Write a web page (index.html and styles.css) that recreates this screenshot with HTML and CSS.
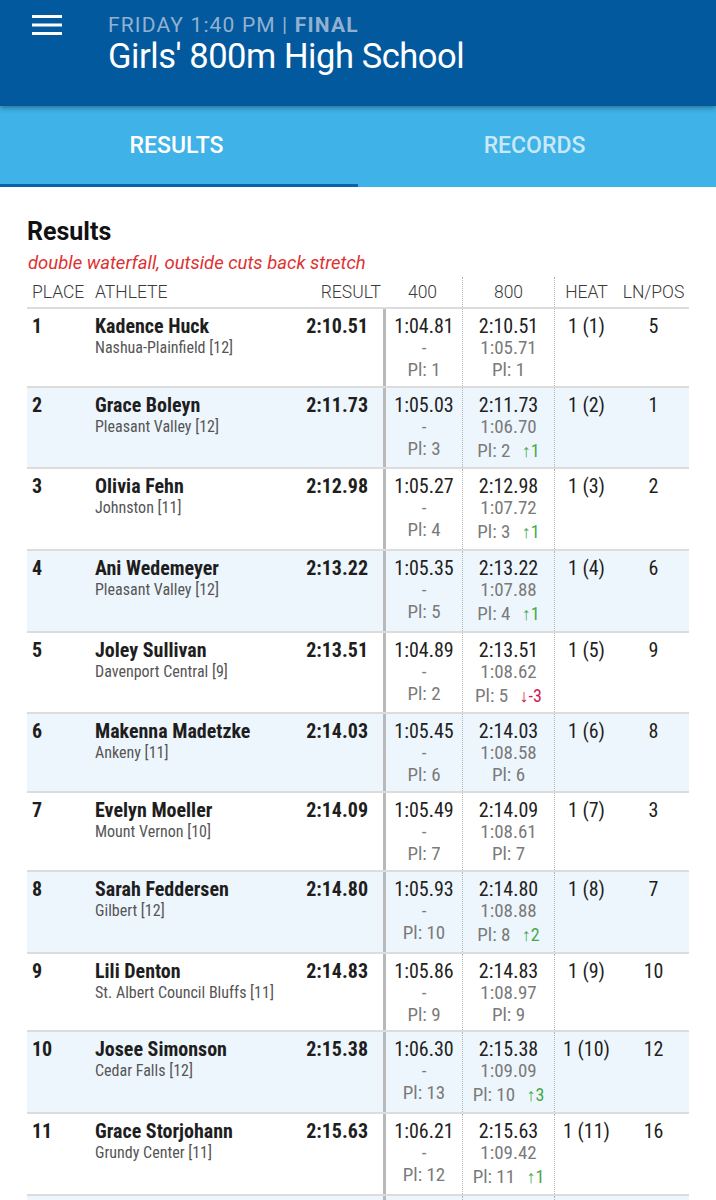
FILE: index.html
```html
<!DOCTYPE html>
<html lang="en">
<head>
<meta charset="utf-8">
<title>Girls' 800m High School</title>
<link rel="stylesheet" href="styles.css">
</head>
<body>
<header class="appbar">
  <button class="menu" aria-label="Menu">
    <svg width="30" height="22" viewBox="0 0 30 22"><rect x="0" y="1" width="30" height="3" fill="#fff"/><rect x="0" y="9.5" width="30" height="3" fill="#fff"/><rect x="0" y="18" width="30" height="3" fill="#fff"/></svg>
  </button>
  <div class="titles">
    <div class="meta">FRIDAY 1:40 PM | <b>FINAL</b></div>
    <div class="title">Girls' 800m High School</div>
  </div>
</header>
<nav class="tabs">
  <div class="tab active">RESULTS</div>
  <div class="tab">RECORDS</div>
</nav>
<main class="content">
  <h1 class="heading">Results</h1>
  <p class="note">double waterfall, outside cuts back stretch</p>
  <div class="table">
    <div class="row head">
      <div class="h place">PLACE</div>
      <div class="h athlete">ATHLETE</div>
      <div class="h result">RESULT</div>
      <div class="h split">400</div>
      <div class="h split dot">800</div>
      <div class="h heat dot">HEAT</div>
      <div class="h lane">LN/POS</div>
    </div>

    <div class="row">
      <div class="c place">1</div>
      <div class="c athlete"><div class="name">Kadence Huck</div><div class="school">Nashua-Plainfield [12]</div></div>
      <div class="c result">2:10.51</div>
      <div class="c split first"><div class="t">1:04.81</div><div class="s">-</div><div class="s">Pl: 1</div></div>
      <div class="c split dot"><div class="t">2:10.51</div><div class="s">1:05.71</div><div class="s">Pl: 1</div></div>
      <div class="c heat dot">1 (1)</div>
      <div class="c lane">5</div>
    </div>

    <div class="row alt">
      <div class="c place">2</div>
      <div class="c athlete"><div class="name">Grace Boleyn</div><div class="school">Pleasant Valley [12]</div></div>
      <div class="c result">2:11.73</div>
      <div class="c split first"><div class="t">1:05.03</div><div class="s">-</div><div class="s">Pl: 3</div></div>
      <div class="c split dot"><div class="t">2:11.73</div><div class="s">1:06.70</div><div class="s">Pl: 2 <span class="up">↑1</span></div></div>
      <div class="c heat dot">1 (2)</div>
      <div class="c lane">1</div>
    </div>

    <div class="row">
      <div class="c place">3</div>
      <div class="c athlete"><div class="name">Olivia Fehn</div><div class="school">Johnston [11]</div></div>
      <div class="c result">2:12.98</div>
      <div class="c split first"><div class="t">1:05.27</div><div class="s">-</div><div class="s">Pl: 4</div></div>
      <div class="c split dot"><div class="t">2:12.98</div><div class="s">1:07.72</div><div class="s">Pl: 3 <span class="up">↑1</span></div></div>
      <div class="c heat dot">1 (3)</div>
      <div class="c lane">2</div>
    </div>

    <div class="row alt">
      <div class="c place">4</div>
      <div class="c athlete"><div class="name">Ani Wedemeyer</div><div class="school">Pleasant Valley [12]</div></div>
      <div class="c result">2:13.22</div>
      <div class="c split first"><div class="t">1:05.35</div><div class="s">-</div><div class="s">Pl: 5</div></div>
      <div class="c split dot"><div class="t">2:13.22</div><div class="s">1:07.88</div><div class="s">Pl: 4 <span class="up">↑1</span></div></div>
      <div class="c heat dot">1 (4)</div>
      <div class="c lane">6</div>
    </div>

    <div class="row">
      <div class="c place">5</div>
      <div class="c athlete"><div class="name">Joley Sullivan</div><div class="school">Davenport Central [9]</div></div>
      <div class="c result">2:13.51</div>
      <div class="c split first"><div class="t">1:04.89</div><div class="s">-</div><div class="s">Pl: 2</div></div>
      <div class="c split dot"><div class="t">2:13.51</div><div class="s">1:08.62</div><div class="s">Pl: 5 <span class="down">↓-3</span></div></div>
      <div class="c heat dot">1 (5)</div>
      <div class="c lane">9</div>
    </div>

    <div class="row alt">
      <div class="c place">6</div>
      <div class="c athlete"><div class="name">Makenna Madetzke</div><div class="school">Ankeny [11]</div></div>
      <div class="c result">2:14.03</div>
      <div class="c split first"><div class="t">1:05.45</div><div class="s">-</div><div class="s">Pl: 6</div></div>
      <div class="c split dot"><div class="t">2:14.03</div><div class="s">1:08.58</div><div class="s">Pl: 6</div></div>
      <div class="c heat dot">1 (6)</div>
      <div class="c lane">8</div>
    </div>

    <div class="row">
      <div class="c place">7</div>
      <div class="c athlete"><div class="name">Evelyn Moeller</div><div class="school">Mount Vernon [10]</div></div>
      <div class="c result">2:14.09</div>
      <div class="c split first"><div class="t">1:05.49</div><div class="s">-</div><div class="s">Pl: 7</div></div>
      <div class="c split dot"><div class="t">2:14.09</div><div class="s">1:08.61</div><div class="s">Pl: 7</div></div>
      <div class="c heat dot">1 (7)</div>
      <div class="c lane">3</div>
    </div>

    <div class="row alt">
      <div class="c place">8</div>
      <div class="c athlete"><div class="name">Sarah Feddersen</div><div class="school">Gilbert [12]</div></div>
      <div class="c result">2:14.80</div>
      <div class="c split first"><div class="t">1:05.93</div><div class="s">-</div><div class="s">Pl: 10</div></div>
      <div class="c split dot"><div class="t">2:14.80</div><div class="s">1:08.88</div><div class="s">Pl: 8 <span class="up">↑2</span></div></div>
      <div class="c heat dot">1 (8)</div>
      <div class="c lane">7</div>
    </div>

    <div class="row">
      <div class="c place">9</div>
      <div class="c athlete"><div class="name">Lili Denton</div><div class="school">St. Albert Council Bluffs [11]</div></div>
      <div class="c result">2:14.83</div>
      <div class="c split first"><div class="t">1:05.86</div><div class="s">-</div><div class="s">Pl: 9</div></div>
      <div class="c split dot"><div class="t">2:14.83</div><div class="s">1:08.97</div><div class="s">Pl: 9</div></div>
      <div class="c heat dot">1 (9)</div>
      <div class="c lane">10</div>
    </div>

    <div class="row alt">
      <div class="c place">10</div>
      <div class="c athlete"><div class="name">Josee Simonson</div><div class="school">Cedar Falls [12]</div></div>
      <div class="c result">2:15.38</div>
      <div class="c split first"><div class="t">1:06.30</div><div class="s">-</div><div class="s">Pl: 13</div></div>
      <div class="c split dot"><div class="t">2:15.38</div><div class="s">1:09.09</div><div class="s">Pl: 10 <span class="up">↑3</span></div></div>
      <div class="c heat dot">1 (10)</div>
      <div class="c lane">12</div>
    </div>

    <div class="row">
      <div class="c place">11</div>
      <div class="c athlete"><div class="name">Grace Storjohann</div><div class="school">Grundy Center [11]</div></div>
      <div class="c result">2:15.63</div>
      <div class="c split first"><div class="t">1:06.21</div><div class="s">-</div><div class="s">Pl: 12</div></div>
      <div class="c split dot"><div class="t">2:15.63</div><div class="s">1:09.42</div><div class="s">Pl: 11 <span class="up">↑1</span></div></div>
      <div class="c heat dot">1 (11)</div>
      <div class="c lane">16</div>
    </div>

    <div class="row alt">
      <div class="c place"></div>
      <div class="c athlete"></div>
      <div class="c result"></div>
      <div class="c split first"></div>
      <div class="c split dot"></div>
      <div class="c heat dot"></div>
      <div class="c lane"></div>
    </div>
  </div>
</main>
</body>
</html>
```

FILE: styles.css
```css
* { box-sizing: border-box; }
html, body { margin: 0; padding: 0; background: #fff; }
body {
  font-family: Roboto, "Noto Sans", sans-serif;
  color: #1e1e1e;
  width: 716px;
  overflow: hidden;
}

.appbar {
  position: relative;
  z-index: 2;
  height: 106px;
  background: #03599e;
  display: flex;
  align-items: flex-start;
  box-shadow: 0 2px 5px rgba(0, 0, 0, 0.35);
}
.menu {
  border: 0;
  background: none;
  padding: 0;
  margin: 14px 0 0 32px;
  width: 30px;
  height: 22px;
  display: block;
}
.menu svg { display: block; }
.titles {
  margin-left: 46px;
  padding-top: 12px;
}
.meta {
  font-size: 21px;
  line-height: 26px;
  color: #92b1d1;
  letter-spacing: 1.15px;
}
.meta b { font-weight: 700; }
.title {
  font-size: 34.5px;
  line-height: 37px;
  color: #fff;
  letter-spacing: -0.45px;
}

.tabs {
  position: relative;
  z-index: 1;
  height: 81px;
  background: #3fb2e7;
  display: flex;
}
.tab {
  flex: 1;
  display: flex;
  align-items: center;
  justify-content: center;
  font-size: 23px;
  font-weight: 500;
  color: rgba(255, 255, 255, 0.72);
  border-bottom: 3px solid transparent;
  padding: 0 5px 0 0;
}
.tab.active {
  color: #fff;
  border-bottom-color: #0b62ab;
}

.content {
  padding: 0 27px;
}
.heading {
  margin: 0;
  padding-top: 30px;
  font-size: 25px;
  line-height: 30px;
  font-weight: 700;
  color: #111;
}
.note {
  margin: 4px 0 0 1px;
  font-size: 18.5px;
  line-height: 24px;
  font-style: italic;
  color: #e03131;
}

.table { margin-top: 2px; }
.row {
  display: grid;
  grid-template-columns: 68px 205px 83px 79px 92px 64px 71px;
  border-bottom: 2px solid #dcdcdc;
  font-family: "Roboto Condensed", Roboto, sans-serif;
  font-stretch: 88%;
}
.row.alt { background: #eef6fd; }
.row.head {
  background: #fff;
  height: 32px;
  font-family: Roboto, sans-serif;
  font-stretch: 100%;
}
.h {
  display: flex;
  align-items: center;
  font-size: 17.5px;
  font-weight: 300;
  color: #3a3a3a;
  line-height: 20px;
}
.h.place { padding-left: 5px; }
.h.result { justify-content: flex-end; padding-right: 2px; }
.h.split, .h.heat, .h.lane { justify-content: center; }

.c {
  padding: 6px 0 4.7px;
  line-height: 22px;
  font-size: 20px;
}
.dot { border-left: 1px dotted #b4b4b4; }
.c.split.first { border-left: 3px solid #b9b9b9; }

.c.place { padding-left: 5px; font-weight: 700; }
.name { font-weight: 700; }
.school {
  font-size: 16px;
  color: #555;
  line-height: 21px;
}
.c.result {
  text-align: right;
  padding-right: 15px;
  font-weight: 700;
}
.c.split { text-align: center; }
.t { color: #222; }
.s { color: #7a7a7a; font-size: 19px; }
.up, .down {
  display: inline-block;
  line-height: 25px;
  margin-left: 7px;
  font-size: 18px;
}
.up { color: #45a84a; }
.down { color: #cf1a4f; }
.c.heat, .c.lane { text-align: center; }
```
